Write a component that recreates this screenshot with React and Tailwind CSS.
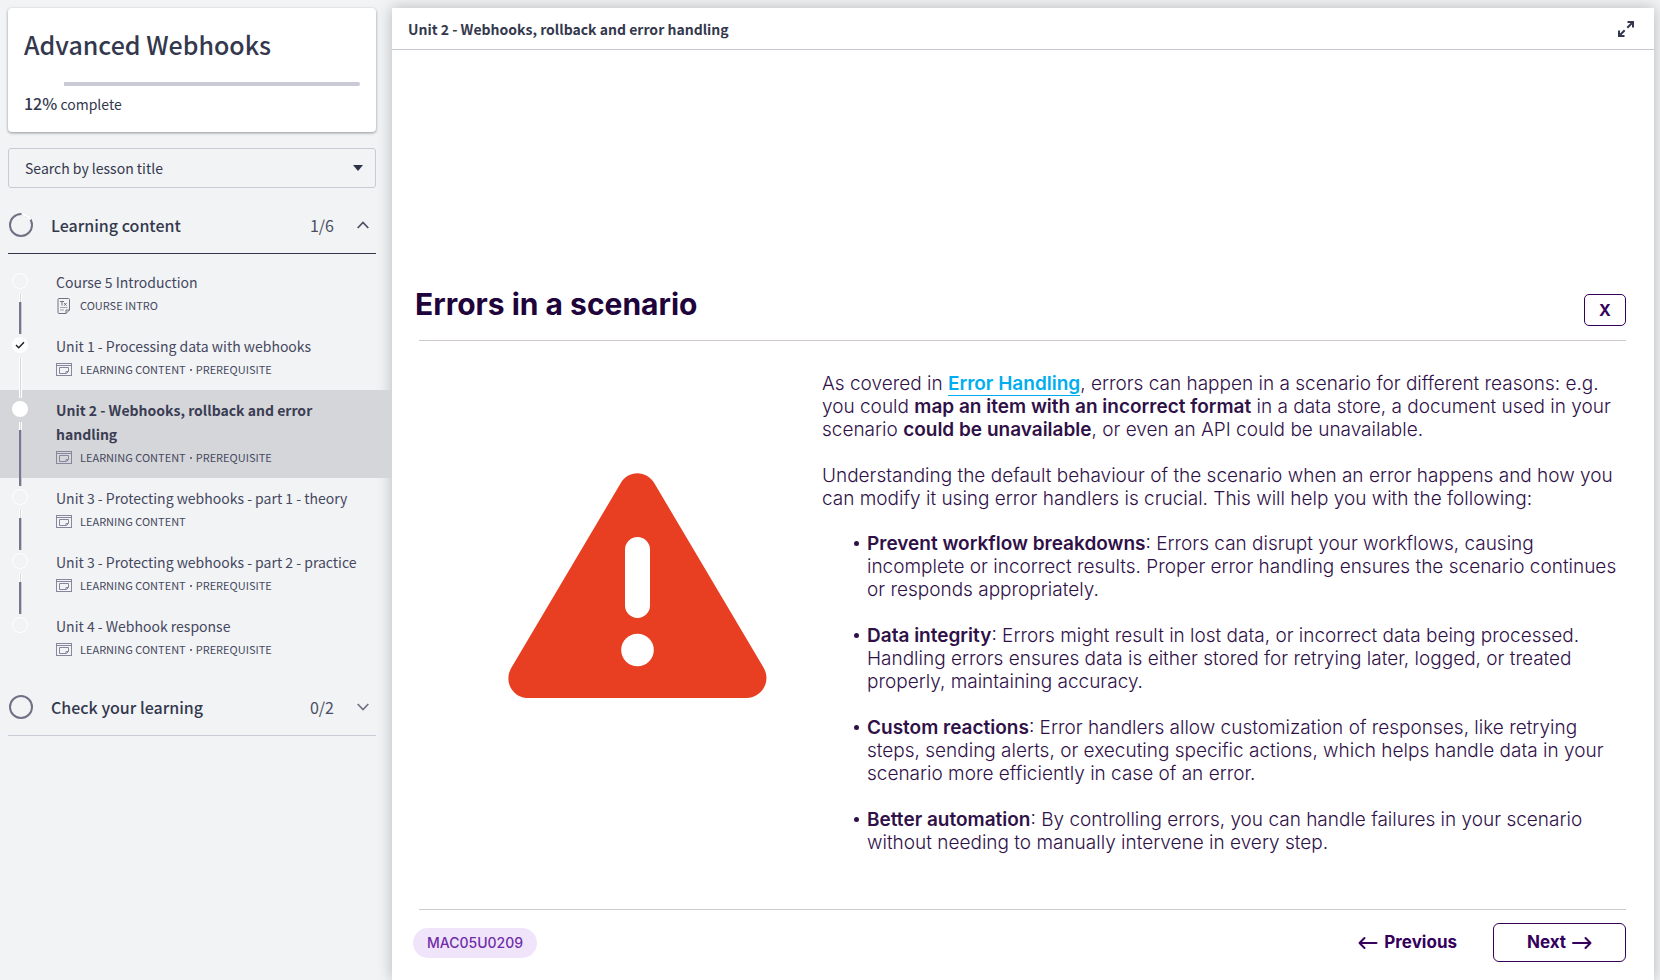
const lessons = [
  { title: "Course 5 Introduction", kind: ["COURSE INTRO"], doc: true, state: "open" },
  { title: "Unit 1 - Processing data with webhooks", kind: ["LEARNING CONTENT", "PREREQUISITE"], state: "done" },
  { title: "Unit 2 - Webhooks, rollback and error handling", kind: ["LEARNING CONTENT", "PREREQUISITE"], state: "current" },
  { title: "Unit 3 - Protecting webhooks - part 1 - theory", kind: ["LEARNING CONTENT"], state: "open" },
  { title: "Unit 3 - Protecting webhooks - part 2 - practice", kind: ["LEARNING CONTENT", "PREREQUISITE"], state: "open" },
  { title: "Unit 4 - Webhook response", kind: ["LEARNING CONTENT", "PREREQUISITE"], state: "open" },
];

const benefits = [
  { name: "Prevent workflow breakdowns", text: ": Errors can disrupt your workflows, causing incomplete or incorrect results. Proper error handling ensures the scenario continues or responds appropriately." },
  { name: "Data integrity", text: ": Errors might result in lost data, or incorrect data being processed. Handling errors ensures data is either stored for retrying later, logged, or treated properly, maintaining accuracy." },
  { name: "Custom reactions", text: ": Error handlers allow customization of responses, like retrying steps, sending alerts, or executing specific actions, which helps handle data in your scenario more efficiently in case of an error." },
  { name: "Better automation", text: ": By controlling errors, you can handle failures in your scenario without needing to manually intervene in every step." },
];

function DocIcon() {
  return (
    <svg viewBox="0 0 16 16" className="h-4 w-4 shrink-0" fill="none" stroke="#6f7285" strokeWidth="1" aria-hidden="true">
      <path d="M3 .5h9.500a1 1 0 0 1 1 1v10.500l-3.500 3.500H3a1 1 0 0 1-1-1v-13a1 1 0 0 1 1-1z" />
      <path d="M10 15.500v-3.500h3.500" />
      <path d="M4 9.500h7.500M4 12h4" stroke="#a3a5b3" />
      <path d="M4 3.500h4M6 3.500v4M8.200 5l2.300 2.700M10.500 5l-2.300 2.700" />
    </svg>
  );
}

function WindowIcon() {
  return (
    <svg viewBox="0 0 16 14" className="h-[14px] w-4 shrink-0" fill="none" stroke="#85889a" strokeWidth="1" aria-hidden="true">
      <rect x=".5" y=".5" width="15" height="12" />
      <path d="M.5 2.500h15M3.500 4.500h9v4l-2 2h-7zM12.500 8.500h-2.500v2" />
    </svg>
  );
}

function Marker({ state }) {
  if (state === "done") {
    return (
      <span role="img" aria-label="Completed" className="flex h-4 w-4 shrink-0 items-center justify-center rounded-full bg-white">
        <svg viewBox="0 0 10 8" className="h-2 w-[10px]" fill="none" stroke="#1f2029" strokeWidth="1.500" aria-hidden="true">
          <path d="M1 4l2.700 2.700L9 1.200" />
        </svg>
      </span>
    );
  }
  if (state === "current") return <span role="img" aria-label="Current lesson" className="h-4 w-4 shrink-0 rounded-full bg-white" />;
  return <span role="img" aria-label="Not started" className="h-4 w-4 shrink-0 rounded-full border border-white" />;
}

function Lesson({ lesson, last }) {
  const current = lesson.state === "current";
  return (
    <li className={current ? "relative flex bg-[#d5d6da] pl-3 pr-4" : "relative flex pl-3 pr-4"}>
      <span className="flex shrink-0 pt-[11px]">
        <Marker state={lesson.state} />
      </span>
      {!last && (
        <span className="absolute -bottom-2 left-[19px] top-8 z-10 flex w-[3px] flex-col" aria-hidden="true">
          <span className="h-2 border-x border-white bg-[#d5d6da]" />
          <span className={lesson.state === "done" ? "flex-1 border-x border-white bg-[#d5d6da]" : "flex-1 border-r border-[#c8c9d2] bg-[#75788c]"} />
        </span>
      )}
      <a href="#lesson" aria-current={current ? "page" : undefined} className="block flex-1 pb-[9px] pl-7 pt-2">
        <span className={current ? "block pr-8 text-sm font-semibold leading-6 text-[#3a3d53]" : "block whitespace-nowrap text-sm leading-6 text-[#45485e]"}>{lesson.title}</span>
        <span className="flex h-[23px] items-center gap-2 text-[11px] text-[#45485e]">
          {lesson.doc ? <DocIcon /> : <WindowIcon />}
          <span className="flex items-center gap-1">
            <span>{lesson.kind[0]}</span>
            {lesson.kind[1] && <span className="h-[2px] w-[2px] bg-[#6f7285]" aria-hidden="true" />}
            {lesson.kind[1] && <span>{lesson.kind[1]}</span>}
          </span>
        </span>
      </a>
    </li>
  );
}

function SectionHeader({ title, count, open }) {
  return (
    <h2>
      <button type="button" aria-expanded={open} className={open ? "flex h-[58px] w-full items-center border-b border-[#34384d] text-left" : "flex h-[58px] w-full items-center border-b border-[#c9cbd6] text-left"}>
        <svg viewBox="0 0 26 26" className="h-[26px] w-[26px]" fill="none" strokeWidth="2" aria-hidden="true">
          <circle cx="13" cy="13" r="11" stroke="#6f7285" />
          {open && <path d="M13.500 2a11 11 0 0 1 9 5.500" stroke="#f1f3f5" strokeWidth="3" />}
          {open && <path d="M14.500 2.200a11 11 0 0 1 8 5.500" stroke="#fff" strokeWidth="1.500" />}
        </svg>
        <span className="flex-1 pl-[17px] text-base font-medium text-[#34384d]">{title}</span>
        <span className="pr-[23px] text-base text-[#4b4e63]">{count}</span>
        <svg viewBox="0 0 12 8" className="mr-[7px] h-2 w-3" fill="none" stroke={open ? "#4b4e63" : "#6f7285"} strokeWidth="1.700" aria-hidden="true">
          <path d={open ? "M.7 7L6 1.500 11.300 7" : "M.7 1L6 6.500 11.300 1"} />
        </svg>
      </button>
    </h2>
  );
}

function Sidebar() {
  return (
    <aside className="w-[392px] shrink-0 pt-2 font-['Noto_Sans_CJK_SC','Noto_Sans',sans-serif] text-[#34384d]">
      <div className="pl-2 pr-4">
        <section className="rounded bg-white px-4 pb-4 pt-[18px] shadow-[0_1px_3px_rgba(0,0,0,0.4)]">
          <h1 className="text-[25px] font-medium leading-9">Advanced Webhooks</h1>
          <div role="progressbar" aria-label="Course progress" aria-valuenow={12} aria-valuemin={0} aria-valuemax={100} className="mt-5 flex h-1">
            <span className="w-10" />
            <span className="flex-1 rounded-r-full bg-[#c9cad6]" />
          </div>
          <p className="mt-[5px] text-sm leading-6"><span className="text-base font-medium leading-6">12%</span> complete</p>
        </section>
        <div className="relative mt-4 flex items-center">
          <select aria-label="Search by lesson title" className="h-10 w-full appearance-none rounded-[3px] border border-[#c9cad6] bg-transparent px-4 text-sm">
            <option>Search by lesson title</option>
          </select>
          <svg viewBox="0 0 10 6" className="pointer-events-none absolute right-[13px] h-[6px] w-[10px]" fill="#2f3349" aria-hidden="true">
            <path d="M0 0h10L5 6z" />
          </svg>
        </div>
        <div className="mt-2"><SectionHeader title="Learning content" count="1/6" open /></div>
      </div>
      <ol className="py-2">
        {lessons.map((l, i) => <Lesson key={l.title} lesson={l} last={i === lessons.length - 1} />)}
      </ol>
      <div className="pl-2 pr-4"><SectionHeader title="Check your learning" count="0/2" open={false} /></div>
    </aside>
  );
}

function Slide() {
  return (
    <article className="flex flex-1 flex-col pb-[18px] pl-[27px] pr-7 pt-[240px] font-['Inter',sans-serif] text-[#2f1148]">
      <div className="flex h-[51px] items-start justify-between border-b border-[#cfc9cc]">
        <h2 className="-ml-1 text-[30px] font-bold leading-7 text-[#20033a]">Errors in a scenario</h2>
        <button type="button" aria-label="Close" className="mt-1 flex h-8 w-[42px] items-center justify-center rounded-[5px] border border-[#35005c] text-base font-bold text-[#35005c]">X</button>
      </div>
      <div className="flex gap-[55px] pt-[31px]">
        <div className="flex w-[348px] shrink-0 items-start justify-end pt-[101px]">
          <svg viewBox="0 0 259 226" className="h-[226px] w-[259px]" role="img" aria-label="Warning">
            <path fill="#e83e21" d="M112.500 10.500C120 -3.200 138.500 -3.200 146.500 10.500L255.500 194.500C264 209 253 225 238.500 225H20.500C5 225 -5 209 3.500 194.500z" />
            <rect x="117" y="64" width="25" height="81" rx="12.500" fill="#fff" />
            <circle cx="129.500" cy="177" r="16.300" fill="#fff" />
          </svg>
        </div>
        <div className="flex-1 text-[19px] font-light leading-[23px]">
          <p>
            As covered in <a href="#error-handling" className="border-b border-[#00aeef] font-semibold text-[#00aeef]">Error Handling</a>, errors can happen in a scenario for different reasons: e.g. you could <strong className="font-semibold">map an item with an incorrect format</strong> in a data store, a document used in your scenario <strong className="font-semibold">could be unavailable</strong>, or even an API could be unavailable.
          </p>
          <p className="mt-[23px]">Understanding the default behaviour of the scenario when an error happens and how you can modify it using error handlers is crucial. This will help you with the following:</p>
          <ul className="mt-[22px] flex flex-col gap-[23px]">
            {benefits.map((b) => (
              <li key={b.name} className="flex pl-[32px]">
                <span className="flex h-[23px] w-[13px] shrink-0 items-center" aria-hidden="true">
                  <span className="h-[5px] w-[5px] rounded-full bg-[#2f1148]" />
                </span>
                <span><strong className="font-semibold">{b.name}</strong>{b.text}</span>
              </li>
            ))}
          </ul>
        </div>
      </div>
      <footer className="mt-auto flex items-center border-t border-[#cfcbcd] pt-[13px] text-[#35005c]">
        <span className="-ml-[6px] rounded-full bg-[#f0e4fb] px-[14px] py-1 text-sm font-medium leading-[22px] text-[#6f2da8]">MAC05U0209</span>
        <div className="ml-auto flex items-center gap-9 text-[17px] font-bold">
          <button type="button" className="flex items-center gap-[6px]">
            <svg viewBox="0 0 20 14" className="h-[14px] w-5" fill="none" stroke="currentColor" strokeWidth="2" strokeLinecap="round" strokeLinejoin="round" aria-hidden="true"><path d="M18.500 7H1.500M6.500 2L1.500 7l5 5" /></svg>
            Previous
          </button>
          <button type="button" className="flex h-[39px] w-[133px] items-center justify-center gap-[6px] rounded-md border border-[#35005c]">
            Next
            <svg viewBox="0 0 20 14" className="h-[14px] w-5" fill="none" stroke="currentColor" strokeWidth="2" strokeLinecap="round" strokeLinejoin="round" aria-hidden="true"><path d="M1 7h17.500M13.500 2l5 5-5 5" /></svg>
          </button>
        </div>
      </footer>
    </article>
  );
}

export default function App() {
  return (
    <div className="flex min-h-screen bg-[#f1f3f5]">
      <Sidebar />
      <main className="mr-[6px] mt-2 flex min-w-0 flex-1 flex-col bg-white shadow-[0_0_14px_rgba(0,0,0,0.25)]">
        <header className="flex h-[42px] items-center justify-between border-b border-[#c6c8cf] pl-4 pr-5 font-['Noto_Sans_CJK_SC','Noto_Sans',sans-serif] text-sm font-semibold text-[#34384d]">
          <h2>Unit 2 - Webhooks, rollback and error handling</h2>
          <button type="button" aria-label="Full screen">
            <svg viewBox="0 0 16 16" className="h-4 w-4" fill="none" stroke="#34384d" strokeWidth="2" aria-hidden="true">
              <path d="M9.500 1H15v5.500M15 1L9.300 6.700M6.500 15H1V9.500M1 15l5.700-5.700" />
            </svg>
          </button>
        </header>
        <Slide />
      </main>
    </div>
  );
}
